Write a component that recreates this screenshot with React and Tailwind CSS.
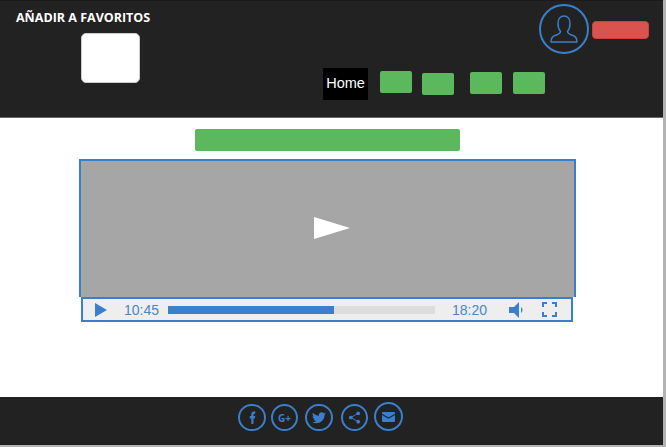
import React from "react";

const Social = ({ size = "w-[28px] h-[27px]", mt = "mt-0", ml = "", children }) => (
  <div className={`${size} ${mt} ${ml} shrink-0 rounded-full border-2 border-[#3a7fcb] flex items-center justify-center`}>
    {children}
  </div>
);

export default function App() {
  return (
    <div className="w-[666px] h-[447px] bg-[#b3b3b3] flex overflow-hidden font-['Liberation_Sans',sans-serif]">
      <div className="w-[663px] h-[445px] bg-white flex flex-col shrink-0">
        <header className="h-[118px] shrink-0 bg-[#222222] border-t border-t-[#1a1a1a] border-b border-b-[#6b6b6b] flex">
          <div className="w-[323px] shrink-0 pt-[9px] pl-[16px]">
            <div className="font-['Open_Sans',sans-serif] font-bold text-[12.5px] leading-[16px] text-white">AÑADIR A FAVORITOS</div>
            <div className="mt-[7px] ml-[65px] w-[59px] h-[50px] bg-white rounded-[5px] border border-[#cccccc]"></div>
          </div>
          <div className="flex-1 flex flex-col">
            <div className="flex justify-end pt-[3px] pr-[14px]">
              <div className="w-[50px] h-[50px] rounded-full border-2 border-[#3a7fcb] flex items-center justify-center">
                <svg width="28" height="28" viewBox="0 0 28 28" fill="none" stroke="#3a7fcb" strokeWidth="1.5" strokeLinejoin="round">
                  <path d="M1 27 C1 23 2 21.500 5 20.500 C8 19.500 10.500 18.500 10.500 16.500 C8.800 14.500 8 12 8 8.500 C8 4 10.500 1 14 1 C17.500 1 20 4 20 8.500 C20 12 19.200 14.500 17.500 16.500 C17.500 18.500 20 19.500 23 20.500 C26 21.500 27 23 27 27 Z" />
                </svg>
              </div>
              <div className="w-[57px] h-[18px] mt-[17px] ml-[3px] bg-[#d9534f] border border-[#d43f3a] rounded-[4px]"></div>
            </div>
            <nav className="flex items-start mt-[14px]">
              <div className="w-[45px] h-[32px] bg-black text-white text-[14.5px] flex items-center justify-center">Home</div>
              <div className="w-[32px] h-[22px] ml-[12px] mt-[3px] bg-[#5cb85c] rounded-[2px]"></div>
              <div className="w-[32px] h-[22px] ml-[10px] mt-[5px] bg-[#5cb85c] rounded-[2px]"></div>
              <div className="w-[32px] h-[22px] ml-[16px] mt-[4px] bg-[#5cb85c] rounded-[2px]"></div>
              <div className="w-[32px] h-[22px] ml-[11px] mt-[4px] bg-[#5cb85c] rounded-[2px]"></div>
            </nav>
          </div>
        </header>

        <main className="flex-1 flex flex-col">
          <div className="w-[265px] h-[22px] mt-[11px] ml-[195px] bg-[#5cb85c] rounded-[2px]"></div>
          <div className="w-[497px] h-[138px] mt-[8px] ml-[79px] bg-[#a6a6a6] border-2 border-[#3a7fcb] border-b-0 flex items-center justify-center">
            <svg width="36" height="22" viewBox="0 0 36 22" className="mt-[-2px] ml-[8px]"><polygon points="0,0 36,11 0,22" fill="#ffffff" /></svg>
          </div>
          <div className="w-[492px] h-[25px] ml-[81px] bg-[#eeeeee] border-2 border-[#3a7fcb] flex items-center">
            <svg width="12" height="14" viewBox="0 0 12 14" className="ml-[12px]"><polygon points="0,0 12,7 0,14" fill="#3a7fcb" /></svg>
            <span className="ml-[17px] w-[36px] text-[14px] text-[#4a86c8] leading-none">10:45</span>
            <div className="ml-[8px] w-[267px] h-[8px] bg-[#dddddd]"><div className="w-[166px] h-[8px] bg-[#3a7fcb]"></div></div>
            <span className="ml-[17px] w-[36px] text-[14px] text-[#4a86c8] leading-none">18:20</span>
            <svg width="16" height="16" viewBox="0 0 16 16" className="ml-[21px]" fill="#3a7fcb">
              <polygon points="0,5 5,5 10,0 10,16 5,11 0,11" />
              <path d="M12 5 C14 6.500 14 9.500 12 11 Z" />
            </svg>
            <svg width="15" height="15" viewBox="0 0 15 15" className="ml-[17px]" fill="none" stroke="#3a7fcb" strokeWidth="2">
              <path d="M1 5 V1 H5 M10 1 H14 V5 M14 10 V14 H10 M5 14 H1 V10" />
            </svg>
          </div>
        </main>

        <footer className="h-[48px] shrink-0 bg-[#222222] flex items-start pt-[7px] pl-[238px]">
          <Social>
            <svg width="7" height="13" viewBox="0 0 9 14" preserveAspectRatio="none" fill="#3a7fcb"><path d="M6 14 H3 V8 H1 V5.500 H3 V3.600 C3 1.400 4.100 0.500 6 0.500 H8 V3 H6.700 C6 3 5.800 3.300 5.800 4 V5.500 H8 L7.600 8 H5.800 V14 Z" /></svg>
          </Social>
          <Social size="w-[27px] h-[27px]" ml="ml-[5px]">
            <span className="font-['Open_Sans',sans-serif] font-bold text-[10px] leading-none text-[#3a7fcb]">G+</span>
          </Social>
          <Social ml="ml-[7px]">
            <svg width="14" height="12" viewBox="0 0 24 20" fill="#3a7fcb"><path d="M24 2.400c-.9.400-1.800.700-2.800.800 1-.6 1.800-1.600 2.200-2.700-1 .6-2 1-3.100 1.200C19.300.7 18 0 16.600 0c-2.700 0-4.900 2.200-4.900 4.900 0 .4 0 .8.100 1.100C7.700 5.800 4.100 3.900 1.700.900c-.4.700-.7 1.600-.7 2.500 0 1.700.9 3.200 2.200 4.100-.8 0-1.600-.2-2.200-.6v.1c0 2.400 1.700 4.400 3.900 4.800-.4.100-.8.200-1.300.2-.3 0-.6 0-.9-.1.600 2 2.400 3.400 4.600 3.400-1.700 1.300-3.800 2.100-6.100 2.100-.4 0-.8 0-1.200-.1C2.200 18.200 4.800 19 7.500 19c9.100 0 14-7.500 14-14v-.6c1-.7 1.800-1.600 2.500-2z" /></svg>
          </Social>
          <Social size="w-[27px] h-[27px]" ml="ml-[8px]">
            <svg width="13" height="13" viewBox="0 0 14 14" fill="#3a7fcb" stroke="none">
              <circle cx="11" cy="2.500" r="2" /><circle cx="3" cy="7" r="2" /><circle cx="11" cy="11.500" r="2" />
              <path d="M11 2.500 L3 7 L11 11.500" fill="none" stroke="#3a7fcb" strokeWidth="1" />
            </svg>
          </Social>
          <Social size="w-[29px] h-[29px]" ml="ml-[6px]" mt="mt-[-2px]">
            <svg width="13" height="10" viewBox="0 0 14 11" preserveAspectRatio="none" fill="#3a7fcb">
              <path d="M1 0 H13 C13.600 0 14 .4 14 1 V1.800 L7 6 L0 1.800 V1 C0 .4 .4 0 1 0 Z" />
              <path d="M0 3.200 L7 7.400 L14 3.200 V10 C14 10.600 13.600 11 13 11 H1 C.4 11 0 10.600 0 10 Z" />
            </svg>
          </Social>
        </footer>
      </div>
    </div>
  );
}
